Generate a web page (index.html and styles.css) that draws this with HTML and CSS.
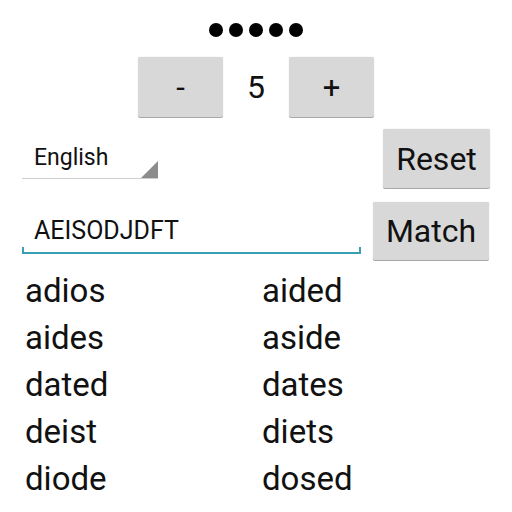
FILE: index.html
```html
<!DOCTYPE html>
<html>
<head>
<meta charset="utf-8">
<link rel="stylesheet" href="styles.css">
</head>
<body>
<div class="app">
  <div class="dots">
    <span class="dot"></span><span class="dot"></span><span class="dot"></span><span class="dot"></span><span class="dot"></span>
  </div>
  <div class="stepper">
    <div class="btn btn-step">-</div>
    <div class="count">5</div>
    <div class="btn btn-step">+</div>
  </div>
  <div class="row row-lang">
    <div class="spinner">
      <span class="spinner-text">English</span>
      <span class="spinner-tri"></span>
    </div>
    <div class="btn btn-reset">Reset</div>
  </div>
  <div class="row row-input">
    <div class="field">
      <span class="field-text">AEISODJDFT</span>
    </div>
    <div class="btn btn-match">Match</div>
  </div>
  <div class="words">
    <div class="word">adios</div><div class="word">aided</div>
    <div class="word">aides</div><div class="word">aside</div>
    <div class="word">dated</div><div class="word">dates</div>
    <div class="word">deist</div><div class="word">diets</div>
    <div class="word">diode</div><div class="word">dosed</div>
  </div>
</div>
</body>
</html>
```
FILE: styles.css
```css
html, body {
  margin: 0;
  padding: 0;
  background: #ffffff;
}
body {
  font-family: Roboto, "Noto Sans", sans-serif;
  color: #111111;
  width: 512px;
  height: 512px;
  overflow: hidden;
}
.app {
  display: flex;
  flex-direction: column;
}
.dots {
  display: flex;
  justify-content: center;
  gap: 6px;
  margin-top: 23px;
  height: 14px;
}
.dot {
  width: 14px;
  height: 14px;
  border-radius: 50%;
  background: #000000;
}
.stepper {
  display: flex;
  justify-content: center;
  margin-top: 20px;
}
.btn {
  display: flex;
  align-items: center;
  justify-content: center;
  background: #d8d8d8;
  border-radius: 2px;
  box-shadow: 0 1px 0 #a8a8a8, 0 0 1px #bdbdbd;
  color: #111111;
  box-sizing: border-box;
}
.btn-step {
  width: 85px;
  height: 60px;
  font-size: 31px;
}
.count {
  width: 66px;
  height: 60px;
  display: flex;
  align-items: center;
  justify-content: center;
  font-size: 32px;
}
.row {
  display: flex;
  justify-content: space-between;
  align-items: flex-end;
  padding: 0 22px;
}
.row-lang {
  margin-top: 12px;
}
.btn-reset {
  width: 107px;
  height: 59px;
  font-size: 32px;
  align-self: flex-start;
}
.spinner {
  position: relative;
  width: 136px;
  height: 50px;
  border-bottom: 1px solid #cfcfcf;
  margin-bottom: 9px;
  display: flex;
  align-items: center;
  box-sizing: border-box;
}
.spinner-text {
  font-size: 23px;
  padding-left: 12px;
  margin-top: 8px;
}
.spinner-tri {
  position: absolute;
  right: 0;
  bottom: 0;
  width: 0;
  height: 0;
  border-style: solid;
  border-width: 0 0 17px 17px;
  border-color: transparent transparent #8c8c8c transparent;
}
.row-input {
  margin-top: 14px;
  padding-right: 23px;
}
.field {
  position: relative;
  width: 339px;
  height: 52px;
  margin-bottom: 6px;
  display: flex;
  align-items: center;
  border-bottom: 2px solid #3a9fb5;
  box-sizing: border-box;
}
.field::before, .field::after {
  content: "";
  position: absolute;
  bottom: 0;
  width: 2px;
  height: 5px;
  background: #3a9fb5;
}
.field::before { left: 0; }
.field::after { right: 0; }
.field-text {
  font-size: 25px;
  padding-left: 12px;
  margin-top: 6px;
}
.btn-match {
  width: 116px;
  height: 58px;
  font-size: 32px;
}
.words {
  display: grid;
  grid-template-columns: 237px 1fr;
  padding-left: 25px;
  margin-top: 7px;
}
.word {
  font-size: 33px;
  height: 47px;
  line-height: 47px;
}
```
